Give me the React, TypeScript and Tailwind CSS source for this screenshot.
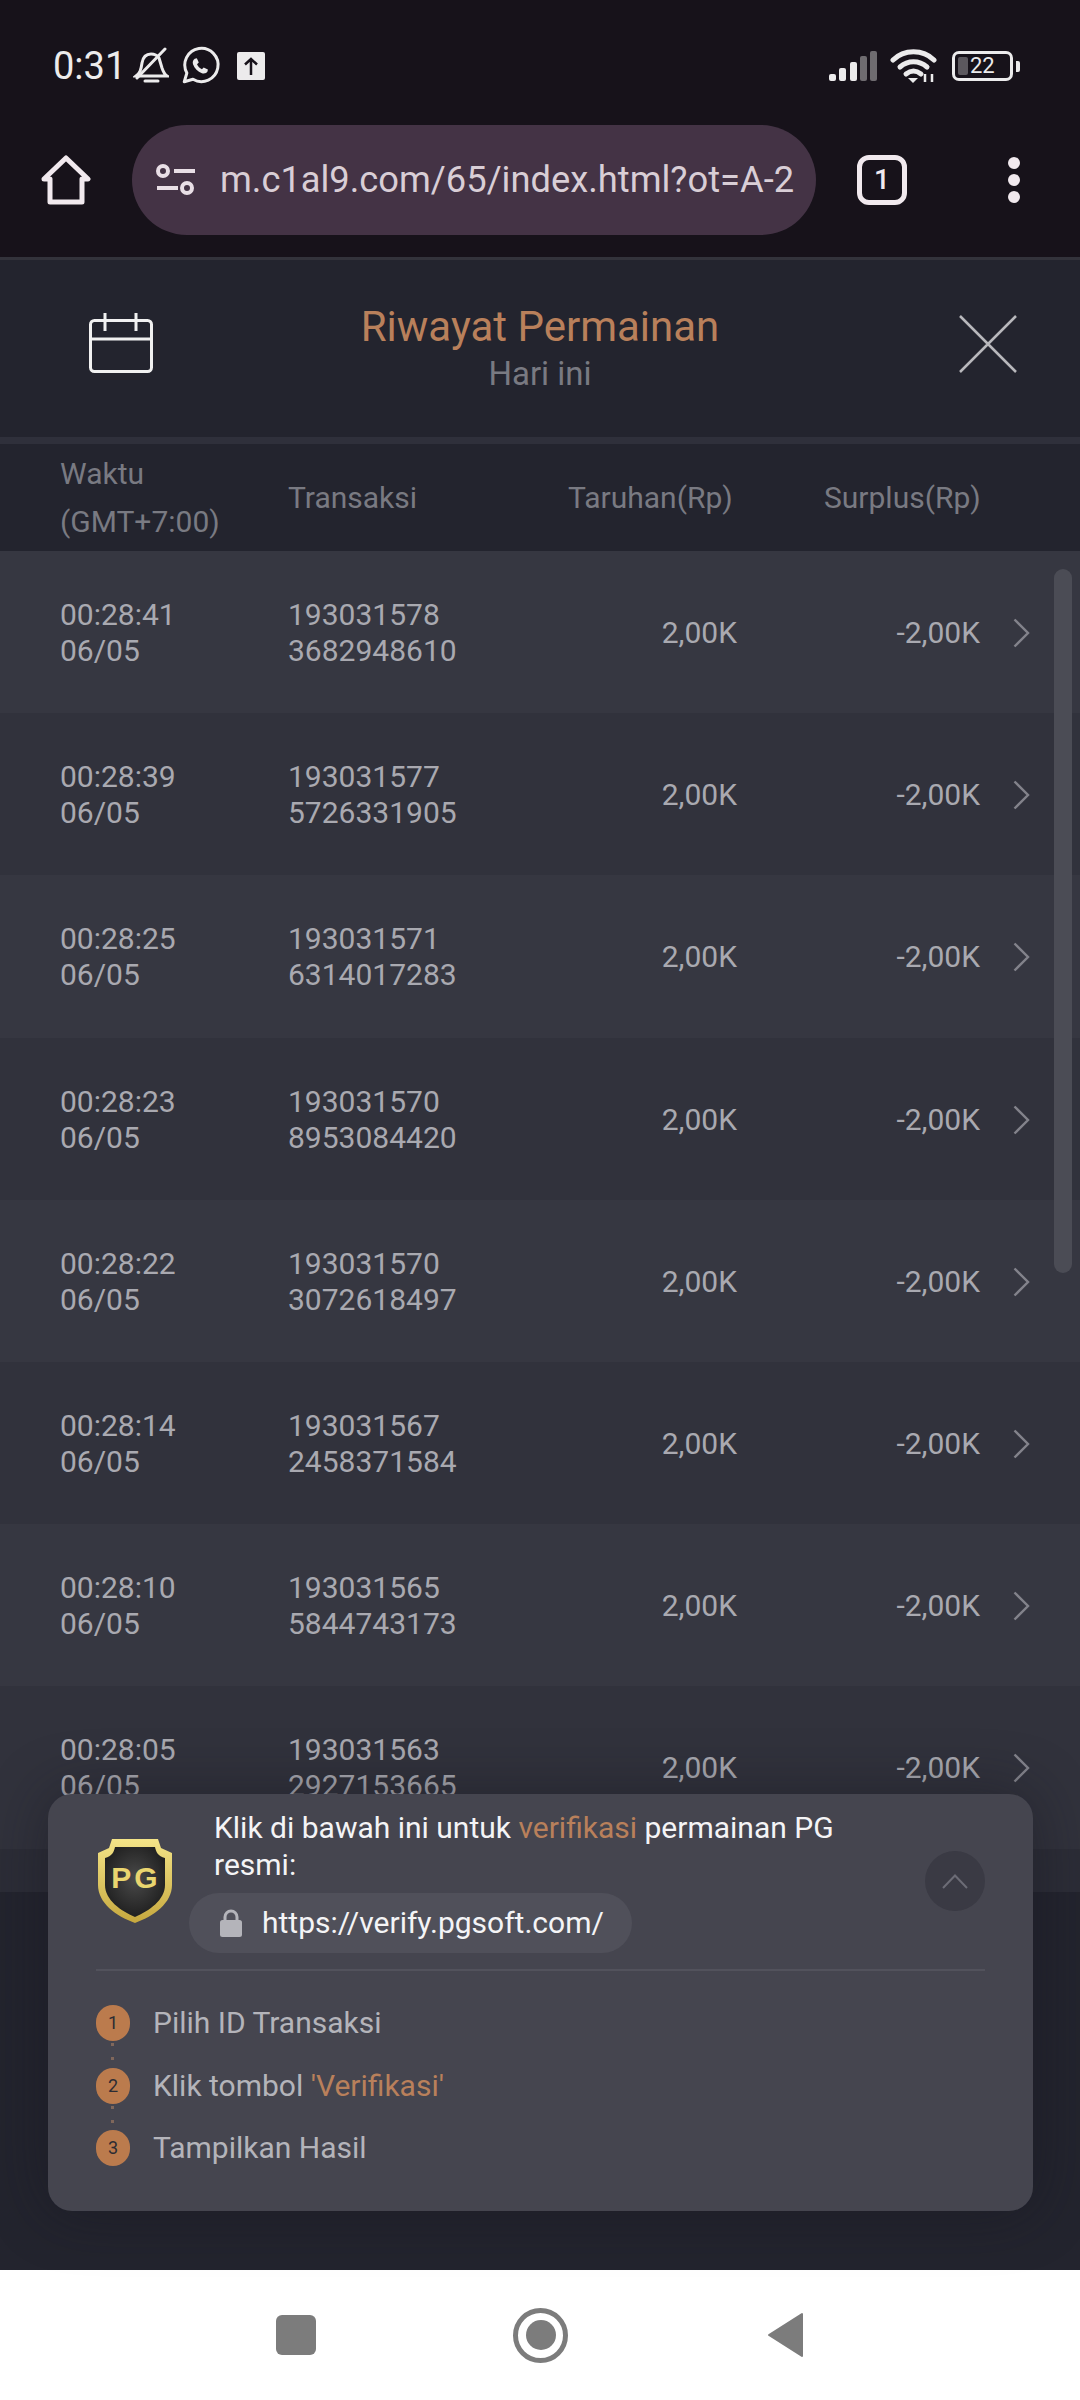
import React from "react";

const rows = [
  { time: "00:28:41", id1: "193031578", id2: "3682948610", bg: "bg-[#363741]" },
  { time: "00:28:39", id1: "193031577", id2: "5726331905", bg: "bg-[#31323c]" },
  { time: "00:28:25", id1: "193031571", id2: "6314017283", bg: "bg-[#363741]" },
  { time: "00:28:23", id1: "193031570", id2: "8953084420", bg: "bg-[#31323c]" },
  { time: "00:28:22", id1: "193031570", id2: "3072618497", bg: "bg-[#363741]" },
  { time: "00:28:14", id1: "193031567", id2: "2458371584", bg: "bg-[#31323c]" },
  { time: "00:28:10", id1: "193031565", id2: "5844743173", bg: "bg-[#363741]" },
  { time: "00:28:05", id1: "193031563", id2: "2927153665", bg: "bg-[#31323c]" },
];

function StatusBar() {
  return (
    <div className="h-[90px] pt-[42px] pl-[53px] pr-[60px] flex items-center justify-between text-[#ecebec]">
      <div className="flex items-center">
        <span className="w-[80px] text-[38px] leading-none">0:31</span>
        <svg width="36" height="38" viewBox="0 0 36 38" fill="none" stroke="#ecebec" strokeWidth="3">
          <path d="M3 29c4-3 5-6 6-13 1-6 4-9 9-9 3 0 6 1 8 4l3 10c1 3 2 6 5 8z" />
          <path d="M12 34h13" strokeLinecap="round" />
          <path d="M32 2 4 31" strokeLinecap="round" />
        </svg>
        <svg className="ml-[10px]" width="42" height="42" viewBox="0 0 24 24" fill="none" stroke="#ecebec" strokeWidth="1.7">
          <path d="M3 21l1.5-5A9.5 9.5 0 1 1 8 19.6z" strokeLinejoin="round" />
          <path d="M9 7.8c-.9.5-1.4 1.7-1 3.2.9 2.4 2.7 4.2 5.1 5.1 1.5.4 2.7-.1 3.2-1l.2-1.1-2.4-1.2-1 1c-1.3-.5-2.3-1.5-2.8-2.8l1-1L10.2 7.6z" fill="#ecebec" stroke="none" />
        </svg>
        <div className="ml-[16px] w-[28px] h-[28px] rounded-[2px] bg-[#ecebec] flex items-center justify-center">
          <svg width="16" height="20" viewBox="0 0 16 20" fill="none" stroke="#17121a" strokeWidth="2.5">
            <path d="M8 19V3M2 8.5 8 3l6 5.5" />
          </svg>
        </div>
      </div>
      <div className="flex items-center">
        <svg width="48" height="30" viewBox="0 0 48 30">
          <rect x="0" y="23" width="7" height="7" rx="2" fill="#ecebec" />
          <rect x="10" y="17" width="7" height="13" rx="2" fill="#ecebec" />
          <rect x="21" y="11" width="7" height="19" rx="2" fill="#ecebec" />
          <rect x="31" y="5" width="7" height="25" rx="2" fill="#6f6c70" />
          <rect x="41" y="0" width="7" height="30" rx="2" fill="#6f6c70" />
        </svg>
        <svg className="ml-[13px]" width="47" height="36" viewBox="0 0 47 36" fill="none" stroke="#ecebec" strokeWidth="5" strokeLinecap="round">
          <path d="M3 12C14 1 33 1 44 12" />
          <path d="M10 19c8-7 19-7 27 0" />
          <path d="M16 26c5-4 10-4 15 0" />
          <path d="M18 30h10l-5 5z" fill="#ecebec" stroke="none" />
          <path d="M35 26v8M42 26v8" strokeWidth="2.5" strokeLinecap="butt" />
        </svg>
        <div className="ml-[15px] w-[61px] h-[30px] rounded-[7px] border-[3px] border-[#ecebec] flex items-center pl-[3px]">
          <div className="w-[10px] h-[18px] rounded-[2px] bg-[#5c585e]" />
          <span className="ml-[2px] text-[22px] leading-none text-[#ecebec]">22</span>
        </div>
        <div className="ml-[3px] w-[4px] h-[11px] rounded-r-[2px] bg-[#ecebec]" />
      </div>
    </div>
  );
}

function BrowserBar() {
  return (
    <div className="h-[170px] flex items-start pt-[35px] border-b-[3px] border-[#33333b]">
      <div className="w-[132px] h-[110px] flex items-center justify-center">
        <svg width="50" height="50" viewBox="0 0 50 50" fill="none" stroke="#f1e9ee" strokeWidth="5" strokeLinejoin="round">
          <path d="M3 24 25 3l22 21h-6v23H9V24z" />
        </svg>
      </div>
      <div className="w-[684px] h-[110px] rounded-full bg-[#443345] flex items-center pl-[23px]">
        <svg width="42" height="36" viewBox="0 0 42 36" fill="none" stroke="#e9dfe6" strokeWidth="4">
          <circle cx="8" cy="9" r="5" />
          <path d="M19 9h21M2 26h21" />
          <circle cx="32" cy="26" r="5" />
        </svg>
        <span className="ml-[23px] text-[36.3px] leading-none text-[#d9ced6] whitespace-nowrap">m.c1al9.com/65/index.html?ot=A-2</span>
      </div>
      <div className="ml-[41px] w-[50px] h-[110px] flex items-center justify-center">
        <div className="w-[50px] h-[50px] rounded-[12px] border-[5px] border-[#f1e9ee] flex items-center justify-center">
          <span className="text-[28px] leading-none font-medium text-[#f1e9ee]">1</span>
        </div>
      </div>
      <div className="ml-[100px] w-[14px] h-[110px] flex flex-col items-center justify-center gap-[5px]">
        <div className="w-[12px] h-[12px] rounded-full bg-[#f1e9ee]" />
        <div className="w-[12px] h-[12px] rounded-full bg-[#f1e9ee]" />
        <div className="w-[12px] h-[12px] rounded-full bg-[#f1e9ee]" />
      </div>
    </div>
  );
}

function Row({ row }: { row: (typeof rows)[number] }) {
  return (
    <div className={"h-[162.2px] pt-[2px] flex items-center text-[30px] leading-[36px] text-[#a9a9b0] " + row.bg}>
      <div className="w-[288px] pl-[60px]">
        <div>{row.time}</div>
        <div>06/05</div>
      </div>
      <div className="w-[300px]">
        <div>{row.id1}</div>
        <div>{row.id2}</div>
      </div>
      <div className="w-[149px] text-right">2,00K</div>
      <div className="w-[243px] text-right">-2,00K</div>
      <svg className="ml-[33px]" width="17" height="30" viewBox="0 0 17 30" fill="none" stroke="#83838b" strokeWidth="2.4">
        <path d="M1.5 1.5 15 15 1.5 28.5" />
      </svg>
    </div>
  );
}

function Step({ n, last, children }: { n: string; last?: boolean; children: React.ReactNode }) {
  return (
    <div className={"relative flex items-center h-[36px] " + (last ? "" : "mb-[26.5px]")}>
      <div className="w-[34px] h-[36px] rounded-full bg-[#bb7b4d] text-[#2c2c33] text-[18px] leading-none flex items-center justify-center">
        {n}
      </div>
      {!last && (
        <div className="absolute left-[15px] top-[38px] flex flex-col gap-[11px]">
          <div className="w-[3px] h-[3px] bg-[#80675b]" />
          <div className="w-[3px] h-[3px] bg-[#80675b]" />
        </div>
      )}
      <span className="ml-[23px] leading-none">{children}</span>
    </div>
  );
}

function VerifyPanel() {
  return (
    <div className="absolute left-[48px] top-[1794px] w-[985px] h-[417px] rounded-[24px] bg-[#45454f] shadow-[0_0_60px_rgba(20,20,28,0.45)] px-[48px]">
      <div className="h-[177px] flex items-start border-b-[2px] border-[#52525c] relative">
        <svg className="mt-[44px] ml-[1px]" width="76" height="86" viewBox="0 0 76 86">
          <defs>
            <linearGradient id="gold" x1="0" y1="0" x2="0" y2="1">
              <stop offset="0" stopColor="#f4e488" />
              <stop offset="1" stopColor="#c6a83e" />
            </linearGradient>
            <radialGradient id="core" cx="0.5" cy="0.45" r="0.6">
              <stop offset="0" stopColor="#4a4a4a" />
              <stop offset="1" stopColor="#1c1c1c" />
            </radialGradient>
          </defs>
          <path d="M15 1h46l3 9 11 5v32c0 18-18 31-37 38C19 78 1 65 1 47V15l11-5z" fill="url(#gold)" />
          <path d="M18 9h40c1 5 3 9 10 11v27c0 15-16 26-30 32C24 73 8 62 8 47V20c7-2 9-6 10-11z" fill="url(#core)" />
          <text x="39" y="50" textAnchor="middle" fontSize="30" fontWeight="700" letterSpacing="3" fontFamily="'Liberation Sans', sans-serif" fill="#e9d56f">PG</text>
        </svg>
        <div className="ml-[41px] w-[660px]">
          <div className="pt-[15px] text-[30px] leading-[37px] text-[#f4f4f6]">
            <div>
              Klik di bawah ini untuk <span className="text-[#b9805b]">verifikasi</span> permainan PG
            </div>
            <div>resmi:</div>
          </div>
          <div className="mt-[10px] -ml-[25px] w-[443px] h-[60px] rounded-full bg-[#50505a] flex items-center pl-[31px]">
            <svg width="22" height="28" viewBox="0 0 22 28" fill="none">
              <path d="M5 13V8a6 6 0 0 1 12 0v5" stroke="#b4b4ba" strokeWidth="3" />
              <rect x="0" y="11" width="22" height="17" rx="2.5" fill="#b4b4ba" />
            </svg>
            <span className="ml-[20px] text-[30px] leading-none text-[#f4f4f6]">https://verify.pgsoft.com/</span>
          </div>
        </div>
        <div className="absolute right-0 top-[57px] w-[60px] h-[60px] rounded-full bg-[#3a3a44] flex items-center justify-center">
          <svg width="26" height="15" viewBox="0 0 26 15" fill="none" stroke="#6c6c76" strokeWidth="2">
            <path d="M1 14 13 1.5 25 14" />
          </svg>
        </div>
      </div>
      <div className="pt-[34px] text-[30px] text-[#b4b4ba]">
        <Step n="1">Pilih ID Transaksi</Step>
        <Step n="2">
          Klik tombol <span className="text-[#b9805b]">'Verifikasi'</span>
        </Step>
        <Step n="3" last>
          Tampilkan Hasil
        </Step>
      </div>
    </div>
  );
}

export default function App() {
  return (
    <div className="relative w-[1080px] h-[2400px] overflow-hidden bg-[#17121a] font-['Roboto',sans-serif]">
      <StatusBar />
      <BrowserBar />

      <div className="h-[2010px] bg-[#23242e]">
        {/* Header */}
        <div className="h-[184px] grid grid-cols-[306px_1fr_306px] border-b-[7px] border-[#2f303b]">
          <div className="pl-[89px] pt-[53px]">
            <svg width="64" height="60" viewBox="0 0 64 60" fill="none" stroke="#f1f1f1" strokeWidth="3">
              <rect x="1.5" y="7.5" width="61" height="51" rx="4" />
              <path d="M1.5 26h61M16 0v18M47 0v18" />
            </svg>
          </div>
          <div className="pt-[43px] text-center">
            <div className="text-[42px] leading-[48px] text-[#b9805b]">Riwayat Permainan</div>
            <div className="text-[33px] leading-[46px] text-[#797a82]">Hari ini</div>
          </div>
          <div className="pt-[55px] pr-[63px] flex justify-end items-start">
            <svg width="58" height="58" viewBox="0 0 58 58" fill="none" stroke="#b8b8bc" strokeWidth="2.5">
              <path d="M1 1l56 56M57 1 1 57" />
            </svg>
          </div>
        </div>

        {/* Table head */}
        <div className="h-[107px] flex items-center text-[30px] text-[#797a82]">
          <div className="w-[288px] pl-[60px] leading-[48px]">
            <div>Waktu</div>
            <div>(GMT+7:00)</div>
          </div>
          <div className="w-[280px]">Transaksi</div>
          <div className="w-[256px]">Taruhan(Rp)</div>
          <div>Surplus(Rp)</div>
        </div>

        {/* Rows */}
        <div className="relative">
          {rows.map((row) => (
            <Row key={row.time} row={row} />
          ))}
          <div className="h-[43px] bg-[#2c2d37]" />
          <div className="absolute right-[8px] top-[18px] w-[18px] h-[704px] rounded-full bg-[#4b4c55]" />
        </div>
      </div>

      <VerifyPanel />

      {/* Android nav bar */}
      <div className="h-[130px] bg-white flex items-center justify-center">
        <div className="w-[40px] h-[40px] rounded-[6px] bg-[#7c7c7c]" />
        <div className="ml-[197px] w-[55px] h-[55px] rounded-full border-[5px] border-[#7c7c7c] flex items-center justify-center">
          <div className="w-[30px] h-[30px] rounded-full bg-[#7c7c7c]" />
        </div>
        <svg className="ml-[199px]" width="37" height="46" viewBox="0 0 37 46">
          <path d="M35 2v42L2 23z" fill="#7c7c7c" stroke="#7c7c7c" strokeWidth="2" strokeLinejoin="round" />
        </svg>
      </div>
    </div>
  );
}
